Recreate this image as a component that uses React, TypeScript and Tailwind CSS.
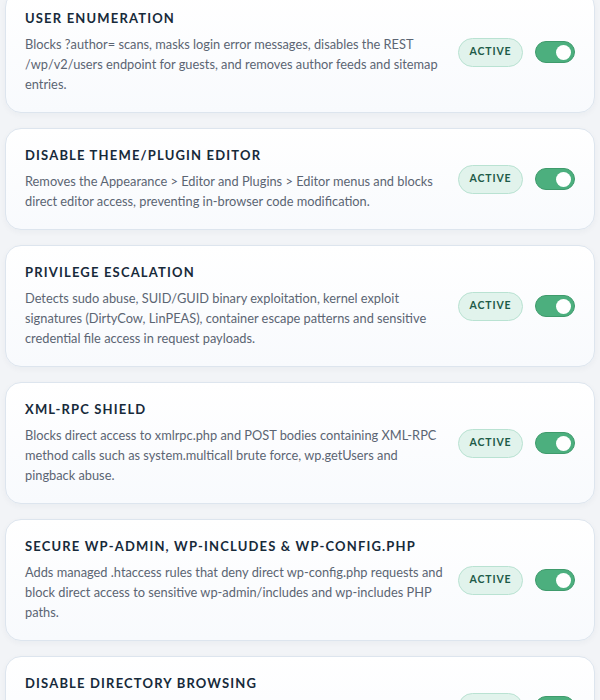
const rules = [
  {
    title: "User Enumeration",
    text: "Blocks ?author= scans, masks login error messages, disables the REST /wp/v2/users endpoint for guests, and removes author feeds and sitemap entries.",
  },
  {
    title: "Disable Theme/Plugin Editor",
    text: "Removes the Appearance > Editor and Plugins > Editor menus and blocks direct editor access, preventing in-browser code modification.",
  },
  {
    title: "Privilege Escalation",
    text: "Detects sudo abuse, SUID/GUID binary exploitation, kernel exploit signatures (DirtyCow, LinPEAS), container escape patterns and sensitive credential file access in request payloads.",
  },
  {
    title: "XML-RPC Shield",
    text: "Blocks direct access to xmlrpc.php and POST bodies containing XML-RPC method calls such as system.multicall brute force, wp.getUsers and pingback abuse.",
  },
  {
    title: "Secure wp-admin, wp-includes & wp-config.php",
    text: "Adds managed .htaccess rules that deny direct wp-config.php requests and block direct access to sensitive wp-admin/includes and wp-includes PHP paths.",
  },
  {
    title: "Disable Directory Browsing",
    text: "Adds Options -Indexes to .htaccess so visitors cannot list the contents of folders that lack an index file.",
  },
];

function Toggle() {
  return (
    <div className="w-[40px] h-[22px] rounded-full bg-[#4caf7e] border border-[#3f9b6c] flex items-center justify-end px-[3px] shrink-0">
      <div className="size-[15px] rounded-full bg-white" />
    </div>
  );
}

export default function App() {
  return (
    <div
      className="min-h-[700px] bg-[#f2f4f7] px-[5px] overflow-hidden"
      style={{ fontFamily: "Lato, 'Noto Sans', sans-serif" }}
    >
      <div className="flex flex-col gap-[15px] -mt-[9px]">
        {rules.map((r) => (
          <div
            key={r.title}
            className="flex items-center gap-[10px] rounded-[16px] border border-[#dde5ee] bg-gradient-to-b from-white to-[#f8fafd] px-[19px] py-[18px] shadow-[0_2px_6px_rgba(30,50,80,0.04)]"
          >
            <div className="flex-1 min-w-0 max-w-[423px]">
              <h3 className="text-[13px] font-bold uppercase tracking-[0.09em] text-[#172a3a] leading-[16px]">
                {r.title}
              </h3>
              <p className="mt-[8px] text-[12.8px] leading-[20px] text-[#5b6573]">
                {r.text}
              </p>
            </div>
            <div className="ml-auto flex items-center gap-[12px] shrink-0">
              <span className="rounded-full border border-[#b9e2d2] bg-[#e1f3ec] w-[65px] justify-center h-[29px] flex items-center text-[10.5px] font-bold tracking-[0.08em] text-[#1d5b48]">
                ACTIVE
              </span>
              <Toggle />
            </div>
          </div>
        ))}
      </div>
    </div>
  );
}
